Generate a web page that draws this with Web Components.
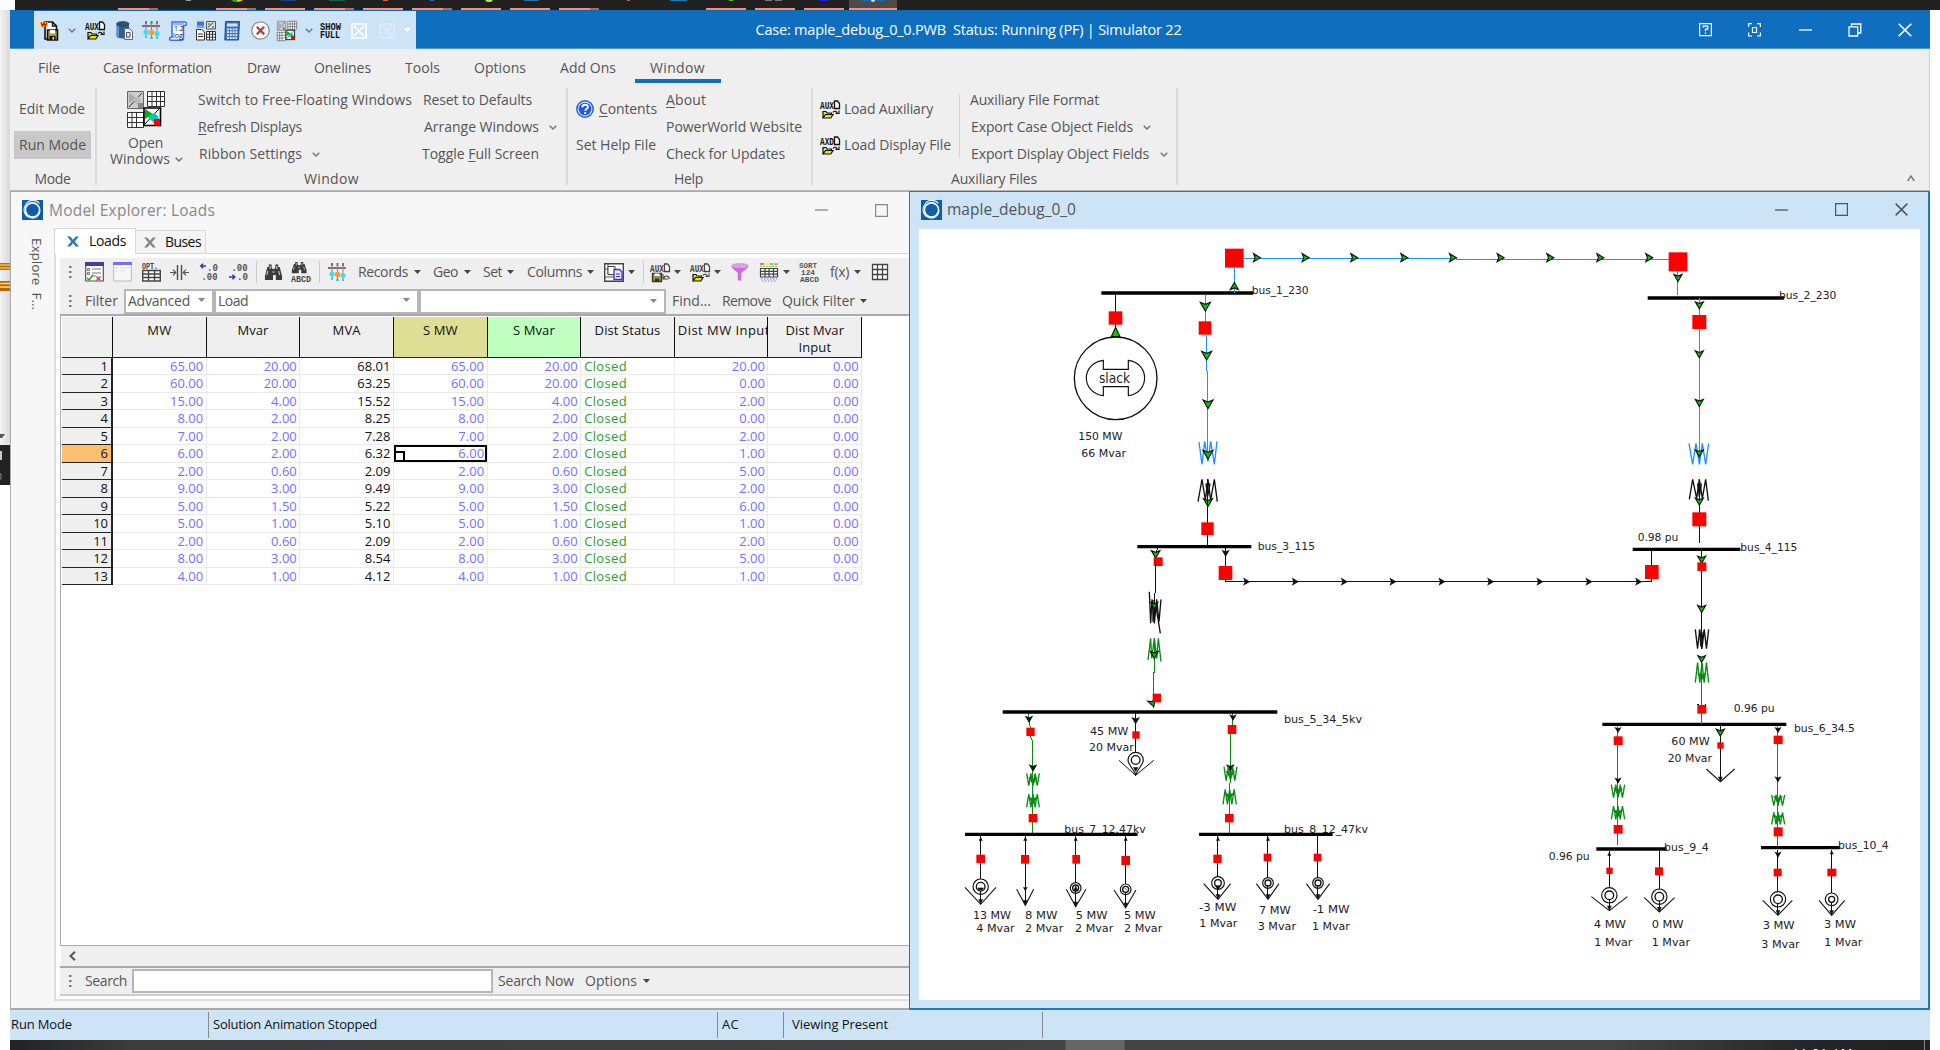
<!DOCTYPE html>
<html lang="en">
<head>
<meta charset="utf-8">
<title>Simulator 22</title>
<style>
html,body{margin:0;padding:0}
body{width:1940px;height:1050px;overflow:hidden;background:#fff;font-family:"Open Sans","Noto Sans",sans-serif;font-size:14px;color:#555}
</style>
</head>
<body>
<sim-desktop></sim-desktop>
<script>
const BASE = `*{box-sizing:border-box}.row{display:flex;align-items:center;white-space:nowrap}.it{flex:none;display:flex;align-items:center}.col{display:flex;flex-direction:column}svg{display:block}`;

function define(name, render, after) {
  customElements.define(name, class extends HTMLElement {
    connectedCallback() {
      if (this.shadowRoot) return;
      this.attachShadow({ mode: 'open' });
      const t = document.createElement('template');
      const [css, html] = render(this);
      t.innerHTML = `<style>${BASE}${css}</style>${html}`;
      this.shadowRoot.append(t.content.cloneNode(true));
      if (after) after(this);
    }
  });
}

/* Horizontal flow: each item is [left, width, markup, extra style]; gaps become margins. */
function row(start, items, style = '') {
  let end = start;
  const out = items.map(([x, w, html, st = '']) => {
    const m = x - end; end = x + w;
    return `<div class="it" style="margin-left:${m}px;width:${w}px;${st}">${html}</div>`;
  }).join('');
  return `<div class="row" style="${style}">${out}</div>`;
}
const T = (x, w, s, st) => [x, w, `<fit-label w="${w}">${s}</fit-label>`, st];
const I = (x, w, h, name, st) => [x, w, `<ui-icon name="${name}" w="${w}" h="${h}"></ui-icon>`, st];
const CH = (cx) => I(cx - 4, 8, 5, 'chev');
const CA = (cx, c = '#444') => [cx - 3.5, 7, `<ui-icon name="caret" w="7" h="4" style="color:${c};margin-top:-1px"></ui-icon>`];

/* Label whose letter spacing is adjusted to fill a given width. */
define('fit-label', () => [`:host{display:block;line-height:1.2;white-space:nowrap}span{display:inline-block}::slotted(u){text-underline-offset:2px;text-decoration-thickness:1px}`, `<span><slot></slot></span>`],
  el => {
    const w = +el.getAttribute('w'), s = el.shadowRoot.querySelector('span');
    el.style.width = w + 'px';
    const n = el.textContent.length, nat = s.getBoundingClientRect().width;
    if (nat) s.style.letterSpacing = ((w - nat) / n).toFixed(3) + 'px';
  });

const auxFolder = (a) => `<text x="0" y="8.5" font-family="Liberation Mono" font-weight="700" font-size="10.5" textLength="14" lengthAdjust="spacingAndGlyphs" fill="currentColor">${a}</text><path d="M14.5 1h3l2 2.500v5h-5z" fill="#fff" stroke="currentColor" stroke-width="1.300"/><path d="M3 18v-6.500h3l1 1.500h4.500v2M3 18l2.500-3.500h7.500l-2.200 3.500z" fill="#e8e030" stroke="#111" stroke-width="1.200"/><path d="M13 12.500c1.500-2 3.500-1.500 4.500 1M15.500 13.500h3.500v-3" fill="none" stroke="currentColor" stroke-width="1.200"/>`;
const binoc = `<path d="M1 13l2.500-9h1.500V1.500h3V4l1 2h2l1-2V1.500h3V4h1.500l2.500 9v4h-6.500v-5h-3v5H1z" fill="#3c3c3c"/><path d="M4 8l-1 4M15.500 8l1 4M6.500 3v3M13.500 3v3" stroke="#ddd" stroke-width="1"/><path d="M9 8h2v2H9z" fill="#999"/>`;
const sliders = `<path d="M0 5h18" stroke="#7d3558" stroke-width="1.500"/><path d="M4 2v15M9.500 2v16M15 2v16" stroke="#888" stroke-width="1"/><path d="M3 0h2v3H3zM8.500 0h2v3h-2zM14 0h2v3h-2z" fill="#777"/><circle cx="4" cy="11" r="2.600" fill="#2ee6f0"/><circle cx="9.500" cy="11.500" r="2.800" fill="#ff9a3c"/><circle cx="15" cy="12.500" r="2.600" fill="#2ee6f0"/><path d="M3 16h2M8 17h3M14 17h2" stroke="#2cc" stroke-width="1.500"/>`;
const openWin = `<path d="M.5.500h16v17H.5z" fill="#ccc" stroke="#666"/><path d="M2 16L15 2" stroke="#333"/><path d="M2 2l7 5-7 5z" fill="#aaa"/><path d="M6 8l5-3 3 5-4 4z" fill="#bbb"/><path d="M11 12h5v5h-5z" fill="#888"/><path d="M20.500.500h17v15h-17zM20.500 5.500h17M20.500 10.500h17M25 .500v15M29.500.500v15M33.500.500v15" fill="#fff" stroke="#333"/><path d="M.5 21.500h16v15H.5zM.5 26.500h16M.5 31.500h16M5 21.500v15M9.500 21.500v15" fill="#fff" stroke="#333"/><path d="M17 17h16.500v17.500H17z" fill="#fff" stroke="#000" stroke-width="1.600"/><path d="M18 33L32 18" stroke="#000"/><path d="M18 18l8 5-8 5z" fill="#00b400"/><path d="M21 26l6-4 4 3 1 5-5 2z" fill="#00c8c0"/><path d="M27 28h6v6h-6z" fill="#f00"/>`;
const tgrid = (n, c) => { let d = `M.5.500h${n}v${n}H.5z`; for (let i = 1; i < 3; i++) { const p = .5 + n * i / 3; d += `M.5 ${p}h${n}M${p} .5v${n}`; } return `<path d="${d}" fill="#fff" stroke="${c}" stroke-width="1.300"/>`; };

const ICONS = {
  chev: ['0 0 8 5', '<path d="M.7.700l3.300 3.300L7.300.700" fill="none" stroke="#777" stroke-width="1.500"/>'],
  chevup: ['0 0 8 7', '<path d="M.7 6l3.300-5L7.300 6" fill="none" stroke="#777" stroke-width="1.400"/>'],
  caret: ['0 0 7 4', '<path d="M0 0h7L3.500 4z" fill="currentColor"/>'],
  grip: ['0 0 3 13', '<path d="M0 0h2.500v2H0zM0 5h2.500v2H0zM0 10h2.500v2H0z" fill="#777"/>'],
  save: ['0 0 18 20', '<path d="M5 1h7.500l4 4v13H5z" fill="#fff" stroke="#111" stroke-width="1.600"/><path d="M12.500 1v4h4" fill="none" stroke="#111" stroke-width="1.400"/><path d="M7.500 9h10v10h-10z" fill="#a89c28" stroke="#111" stroke-width="1.600"/><path d="M10 9h5v3.500h-5z" fill="#fff"/><path d="M9.500 15h6v4h-6z" fill="#111"/><path d="M12.500 16h1.500v2.500h-1.500z" fill="#eee"/><path d="M0 1h8v4.500H0z" fill="#ffe000"/><path d="M1 1.500l1.500 3.500 1.500-3.500 1.500 3.500 1.500-3.500" fill="none" stroke="#d00" stroke-width="1.200"/>'],
  aux: ['0 0 20 19', auxFolder('AUX')],
  axd: ['0 0 20 19', auxFolder('AXD')],
  auxsave: ['0 0 20 19', `<text x="0" y="8.500" font-family="Liberation Mono" font-weight="700" font-size="10.500" textLength="14" lengthAdjust="spacingAndGlyphs" fill="#444">AUX</text><path d="M14.500 1h3l2 2.500v5h-5z" fill="#fff" stroke="#444" stroke-width="1.300"/><path d="M2.500 10.500h9v8h-9z" fill="#9a943c" stroke="#333" stroke-width="1.300"/><path d="M4.500 10.500h5V13h-5z" fill="#fff"/><path d="M5 15.500h4v3H5z" fill="#333"/><path d="M13 11v5h5M13.500 16c1-4 5-4 6 0" fill="none" stroke="#444" stroke-width="1.100"/>`],
  db: ['0 0 18 19', '<path d="M.5 3v12c0 1.500 3 2.500 6.500 2.500s6-1 6-2.500V3z" fill="#2d5f93"/><path d="M1 4v11c0 1 1 1.500 2 1.800V5z" fill="#5c93c4"/><ellipse cx="6.800" cy="2.800" rx="6.300" ry="2.300" fill="#2a5280" stroke="#173a60" stroke-width=".6"/><path d="M8.500 7.500h5l3 3v8h-8z" fill="#e8eef4" stroke="#667" stroke-width="1"/><path d="M10.500 15.500v-4h3.500v4.500h-4z" fill="none" stroke="#456" stroke-width="1"/>'],
  sliders: ['0 0 18 19', sliders],
  log: ['0 0 18 20', '<path d="M3 1h13c2 0 2 3.500 0 3.500h-1.500V17c0 1.500-1 2.200-2.200 2.200H2c-2 0-2-3 0-3h1z" fill="#f4f7ff" stroke="#3d6be0" stroke-width="1.500"/><path d="M3.500 1.800h11v2.500h-11z" fill="#8fb4ff"/><text x="5" y="10" font-family="Open Sans" font-size="7" fill="#222">1.2</text><text x="4" y="16.500" font-family="Open Sans" font-size="7" fill="#222">log</text>'],
  combo: ['0 0 21 20', '<path d="M2 .500h7v6H2z" fill="#3c76c8"/><path d="M1 6.500h9l-1-2H2z" fill="#88aadd"/><path d="M1.500 8.500h5l3 2.500v8h-8z" fill="#fff" stroke="#333"/><path d="M3 13h5M3 15.500h5" stroke="#333"/><path d="M11.500.500h9v7.500h-9z" fill="#ddd" stroke="#555"/><path d="M13 6l5-4M13 3h2M17 6h2" stroke="#444"/><path d="M11.500 10.500h9v8.500h-9zM11.500 13.300h9M11.500 16.200h9M14.500 10.500v8.500M17.500 10.500v8.500" fill="#fff" stroke="#333"/>'],
  calc: ['0 0 16 20', '<path d="M1.500.500h14l-1 18.500H.8z" fill="#3b74bd" stroke="#234f8c"/><path d="M3 2.500h10.500v3H3z" fill="#d4e4f6"/><path d="M3 8.300h10.500M3 11.200h10.500M3 14.100h10.500M3 17h10" stroke="#e6f0fb" stroke-width="1.800" stroke-dasharray="1.900 .900"/>'],
  redx: ['0 0 19 19', '<circle cx="9.500" cy="9.500" r="8.700" fill="#fbfbfb" stroke="#8d8d8d" stroke-width="1.300"/><path d="M5.800 5.800l7.400 7.400M13.200 5.800l-7.400 7.400" stroke="#e8222a" stroke-width="2.200"/>'],
  openwin: ['0 0 38 37', openWin],
  show: ['0 0 22 17', '<g font-family="Liberation Mono" font-weight="700" font-size="10.500" fill="#111"><text x="0" y="7.500" textLength="21" lengthAdjust="spacingAndGlyphs">SHOW</text><text x="0" y="16" textLength="20" lengthAdjust="spacingAndGlyphs">FULL</text></g>'],
  xbox: ['0 0 16 16', '<path d="M1 1h14v14H1zM3 3l10 10M13 3L3 13" fill="none" stroke="#fff" stroke-width="1.600"/>'],
  help: ['0 0 13 14', '<path d="M.6.600h11.800v12H.6z" fill="none" stroke="#fff" stroke-width="1.200"/><path d="M4.300 4.500V3.200h4.400v3H6.500v2M6.500 9.500v1.600" fill="none" stroke="#fff" stroke-width="1.300"/>'],
  focus: ['0 0 13 14', '<path d="M.6 4V.600H4M9 .600h3.400V4M12.400 9.500V13H9M4 13H.6V9.500M4.500 4.500h4v5h-4z" fill="none" stroke="#fff" stroke-width="1.200"/>'],
  min: ['0 0 13 2', '<path d="M0 1h13" stroke="currentColor" stroke-width="1.300"/>'],
  restore: ['0 0 14 14', '<path d="M1 3.800h8.700v9.200H1zM3.500 3.800V1h9.300v9H9.700" fill="none" stroke="#fff" stroke-width="1.300"/>'],
  max: ['0 0 13 13', '<path d="M.6.600h11.800v11.800H.6z" fill="none" stroke="currentColor" stroke-width="1.200"/>'],
  close: ['0 0 14 14', '<path d="M.7.700l12.600 12.600M13.300.700L.7 13.300" stroke="currentColor" stroke-width="1.600"/>'],
  tabx: ['0 0 12 12', '<path d="M0 .500h3.300L6 4 8.700.500H12L7.700 6l4.300 5.500H8.700L6 8l-2.700 3.500H0L4.300 6z" fill="currentColor"/>'],
  question: ['0 0 18 18', '<circle cx="9" cy="9" r="8.200" fill="#cfe0fb" stroke="#2b62d8" stroke-width="1.500"/><circle cx="9" cy="9" r="6.300" fill="#2459d6"/><path d="M6.300 7.300c0-3.400 5.600-3.400 5.600-.300 0 2-2.700 2-2.700 3.800M9.200 12v2" fill="none" stroke="#fff" stroke-width="1.900"/>'],
  logo: ['0 0 21 20', '<path d="M0 0h21v20H0z" fill="#0f5ca8"/><circle cx="10.500" cy="10" r="7.100" fill="none" stroke="#fff" stroke-width="1.700"/><path d="M17.500 3.500a8.500 8.500 0 0 0-13.500.500M4.500 4c-4 4-3 10.500 2 13M5 15.500c5 5 12 2 13-4" fill="none" stroke="#e6f1fb" stroke-width="1.100"/>'],
  t1: ['0 0 19 20', '<path d="M.7 1h17.600v18H.7z" fill="#fff" stroke="#555" stroke-width="1.200"/><path d="M0 0h19v4H0z" fill="#443aa8"/><path d="M2.500 6.500h2v2h-2zM2.500 10.500h2v2h-2zM7 7h9M7 11h9M7 14h4" fill="none" stroke="#777"/><path d="M2 16l2 2 4-5" fill="none" stroke="#2a9a2a" stroke-width="1.400"/><path d="M11.500 14.500l4 4M15.500 14.500l-4 4" stroke="#e33" stroke-width="1.400"/>'],
  t2: ['0 0 19 20', '<path d="M.7 1h17.600v18H.7z" fill="#f7f7f7" stroke="#bbb"/><path d="M0 0h19v3H0z" fill="#7470ea"/><path d="M2 6h3M7 6h9M2 9h3M7 9h5" stroke="#ddd"/>'],
  opt: ['0 0 19 20', '<text x="0" y="6.500" font-family="Liberation Mono" font-weight="700" font-size="9" textLength="16" lengthAdjust="spacingAndGlyphs" fill="#444">OPT.</text><path d="M.7 8.500h17.600v10.500H.7zM.7 12h17.600M.7 15.500h17.600M6.500 8.500V19M12.500 8.500V19" fill="#fff" stroke="#444" stroke-width="1.400"/>'],
  width: ['0 0 19 18', '<path d="M7.500 1v16M11.500 1v16" stroke="#555" stroke-width="1.500"/><path d="M0 9h5.500M3 6l2.800 3L3 12M19 9h-5.500M16 6l-2.800 3 2.800 3" fill="none" stroke="#555" stroke-width="1.200"/>'],
  dec1: ['0 0 19 18', '<path d="M6 3H1M3 .700L.8 3 3 5.300" fill="none" stroke="#3b32b8" stroke-width="1.600"/><g font-family="Liberation Mono" font-size="10.500" font-weight="700" fill="#555"><text x="7" y="7.500" textLength="11" lengthAdjust="spacingAndGlyphs">.0</text><text x="1.500" y="17" textLength="16" lengthAdjust="spacingAndGlyphs">.00</text></g>'],
  dec2: ['0 0 19 18', '<path d="M0 14h5.500M3.500 11.700L5.700 14l-2.200 2.300" fill="none" stroke="#3b32b8" stroke-width="1.600"/><g font-family="Liberation Mono" font-size="10.500" font-weight="700" fill="#555"><text x="2.500" y="7.500" textLength="16" lengthAdjust="spacingAndGlyphs">.00</text><text x="8" y="17" textLength="11" lengthAdjust="spacingAndGlyphs">.0</text></g>'],
  binoc: ['0 0 20 19', binoc],
  binabc: ['0 0 20 20', `<g transform="translate(0 -1) scale(.82 .72)">${binoc}</g><text x="0" y="19.500" font-family="Liberation Mono" font-weight="700" font-size="8.500" textLength="20" lengthAdjust="spacingAndGlyphs" fill="#444">ABCD</text>`],
  copy: ['0 0 20 19', '<path d="M.7.700h18.600v17.600H.7z" fill="#fff" stroke="#444" stroke-width="1.400"/><path d="M.7 6h8M4 .700v11h5M.7 14h18" fill="none" stroke="#555"/><path d="M4 3.500h7v8H4z" fill="#fff" stroke="#444"/><path d="M10 6.500h5.500l2.500 2.500v7.500h-8z" fill="#e8e8ff" stroke="#3a39a8" stroke-width="1.300"/><path d="M12 11h4M12 13.500h4" stroke="#3a39a8"/>'],
  funnel: ['0 0 18 18', '<ellipse cx="9" cy="2.600" rx="8.700" ry="2.500" fill="#e29be6"/><path d="M.3 3c1 3.500 5.500 5.500 6.500 7v7.500h3.500V10c1-1.500 6.200-3.500 7.400-7-3 2.600-14 2.600-17.400 0z" fill="#cc6fd2"/>'],
  colgrid: ['0 0 18 19', '<path d="M.5 5.500h17v8.500H.5zM.5 8.300h17M.5 11.200h17M5 5.500V14M9 5.500V14M13.500 5.500V14" fill="#fff" stroke="#444" stroke-width="1.200"/><path d="M0 1h4" stroke="#e44" stroke-width="1.500"/><path d="M5 1h4" stroke="#ee3" stroke-width="1.500"/><path d="M10 1h3" stroke="#3c3" stroke-width="1.500"/><path d="M14 1h4" stroke="#f84" stroke-width="1.500"/><path d="M0 3.500h18" stroke="#9c6" stroke-dasharray="2 1"/><path d="M1 16h16M2 18h14" stroke="#77f" stroke-dasharray="1.500 1.500"/>'],
  sort: ['0 0 20 20', '<g font-family="Liberation Mono" font-weight="700" font-size="8" fill="#555"><text x="0" y="6" textLength="18" lengthAdjust="spacingAndGlyphs">SORT</text><text x="2" y="13" textLength="14" lengthAdjust="spacingAndGlyphs">124</text><text x="1" y="20" textLength="19" lengthAdjust="spacingAndGlyphs">ABCD</text></g>'],
  grid: ['0 0 16 16', tgrid(15, '#444')],
  left: ['0 0 7 10', '<path d="M6 .700L1.500 5 6 9.300" fill="none" stroke="#555" stroke-width="2"/>']
};
define('ui-icon', el => [`:host{display:block;flex:none}svg{overflow:visible}`, `<svg width="${el.getAttribute('w')}" height="${el.getAttribute('h')}" viewBox="${ICONS[el.getAttribute('name')][0]}" preserveAspectRatio="none">${ICONS[el.getAttribute('name')][1]}</svg>`]);

/* Taskbar sliver above the window */
define('task-strip', () => {
  const run = [[118, 31, 9], [216, 31, 9], [265, 40], [314, 31, 9], [363, 40], [412, 31, 9], [461, 40], [510, 40], [559, 31, 9], [706, 40], [755, 40], [804, 40], [849, 48]];
  const dots = [[186, 5, '#999'], [281, 15, '#1d3f92'], [329, 16, '#1c6040'], [383, 5, '#e0603c'], [430, 4, '#2a62d8'], [524, 15, '#2a6f9c'], [627, 3, '#c07038'], [670, 17, '#1d7ab8'], [729, 4, '#6ab41e'], [765, 7, '#777'], [775, 7, '#777'], [819, 9, '#2416ff']];
  let s = `<rect x="849" width="48" height="10" fill="#4b4b4b"/>`;
  run.forEach(([x, w, d]) => s += `<rect x="${x}" y="8" width="${w}" height="2" fill="#ff8c6c"/>` + (d ? `<rect x="${x + w}" y="8" width="${d}" height="2" fill="#b4685a"/>` : ''));
  dots.forEach(([x, w, c]) => s += `<rect x="${x}" width="${w}" height="1" fill="${c}"/>`);
  s += `<path d="M231 0h11l-3 2h-5z" fill="#2c9e3c"/><path d="M237 0h6l-3 1.500h-3z" fill="#f4c81e"/><path d="M485 0h8l-2 2h-4z" fill="#b4e85c"/><path d="M861 0h24v1.500h-24z" fill="#1766b0"/><circle cx="873" cy="0" r="2" fill="#dde"/>`;
  return [`:host{display:block;height:10px;background:linear-gradient(90deg,#fff 15px,#212121 15px)}`, `<svg width="1940" height="10">${s}</svg>`];
});

define('title-bar', () => [`:host{display:block;height:39px;background:#106ebe;border-top:1px solid #0f65ae;border-bottom:1px solid #4d97d1;color:#fff}.row{height:37px}.qat{background:#cde4f6;height:38px;color:#111}.qat .row{height:38px;margin-top:1px}fit-label{font-size:14.5px}`,
  row(10, [[34, 382, `<div class="qat" style="width:382px">${row(34, [
    I(40, 18, 20, 'save'), CH(72), I(85, 20, 19, 'aux'), I(116, 18, 19, 'db'), I(142, 18, 19, 'sliders'), I(169, 18, 20, 'log'), I(195, 21, 20, 'combo'), I(224, 16, 20, 'calc'), I(251, 19, 19, 'redx'), I(277, 20, 20, 'openwin'), CH(309), I(320, 22, 17, 'show'), I(351, 16, 16, 'xbox'), I(379, 16, 16, 'xbox', 'opacity:.3'), CA(407.5, '#fff')])}</div>`],
    T(755.5, 426, 'Case: maple_debug_0_0.PWB&nbsp; Status: Running (PF) | Simulator 22'),
    I(1698.5, 13, 14, 'help'), I(1748, 13, 14, 'focus'), I(1799, 13, 2, 'min'), I(1848, 14, 14, 'restore'), I(1898, 14, 14, 'close')])]);

define('ribbon-tabs', () => [`:host{display:block;height:36px}.row{height:34px}.it{height:34px;padding-top:4px}.on{width:86px;height:34px;margin-top:-4px;padding:4px 0 0 15px;border-bottom:4px solid #106ebe;display:flex;align-items:center}.on fit-label{margin-top:4px}`,
  row(10, [T(38, 22, 'File', 'padding-top:5px'), T(103, 109, 'Case Information'), T(247, 33, 'Draw'), T(314, 57, 'Onelines'), T(405, 35, 'Tools'), T(474, 52, 'Options'), T(560, 56, 'Add Ons'), [635, 86, `<div class="on"><fit-label w="55">Window</fit-label></div>`]])]);

/* Ribbon columns: two-line or three-line stacks */
const stack = (x, w, n, rows) => [x, w, `<div class="col s${n}">${rows.map(r => row(x, r)).join('')}</div>`];
define('ribbon-group', el => [`:host{display:flex;flex-direction:column;flex:none;border-right:2px solid #dadada;height:97px;margin-top:3px}.body{height:81px;flex:none}.cap{height:20px;flex:none;padding-top:2px}`, `<div class="body"><slot></slot></div><div class="cap"><slot name="cap"></slot></div>`]);
define('ribbon-bar', () => {
  const g = (x, w, body, cx, cw, cap) => `<ribbon-group style="width:${w}px"><div style="margin-top:-3px">${row(x, body)}</div><div slot="cap">${row(x, [T(cx, cw, cap)])}</div></ribbon-group>`;
  return [`:host{display:flex;height:105px}.row{align-items:flex-start}.col .row{align-items:center}.s3{padding-top:1px}.s3>.row{height:28px}.s3>.row:nth-child(2){height:26px}.s2{padding-top:6px}.s2>.row{height:36px}.run{width:77px;height:28px;background:#c8c8c8;padding-left:5px;display:flex;align-items:center}
  .open{padding-top:6px}.open .row{height:16px;align-items:center}.short{width:1px;height:64px;background:#d4d4d4;margin-top:9px}`,
  g(10, 87, [stack(14, 77, 2, [[T(19, 66, 'Edit Mode')], [[14, 77, '<div class="run"><fit-label w="67">Run Mode</fit-label></div>']]])], 34.5, 36, 'Mode') +
  g(97, 471, [
    [110, 75, `<div class="open">${row(110, [I(127, 38, 37, 'openwin')], 'height:43px;align-items:flex-start')}${row(110, [T(128, 35, 'Open')], 'margin-top:1px')}${row(110, [T(110, 60, 'Windows'), CH(179)])}</div>`],
    stack(198, 214, 3, [[T(198, 214, 'Switch to Free-Floating Windows')], [T(198, 104, '<u>R</u>efresh Displays')], [T(199, 103, 'Ribbon Settings'), CH(316)]]),
    stack(422, 136, 3, [[T(423, 109, 'Reset to Defaults')], [T(424, 115, 'Arrange Windows'), CH(553)], [T(422, 117, 'Toggle <u>F</u>ull Screen')]])], 304, 55, 'Window') +
  g(568, 245, [stack(576, 82, 2, [[I(576, 18, 18, 'question'), T(599, 58, '<u>C</u>ontents')], [T(576, 80, 'Set Help File')]]),
    stack(666, 137, 3, [[T(666, 40, '<u>A</u>bout')], [T(666, 136, 'PowerWorld Website')], [T(666, 119, 'Check for Updates')]])], 674, 29, 'Help') +
  g(813, 365, [stack(820, 132, 2, [[I(820, 20, 19, 'aux', 'color:#111'), T(844, 89, 'Load Auxiliary')], [I(820, 20, 19, 'axd', 'color:#111'), T(844, 107, 'Load Display File')]]),
    [959, 1, '<div class="short"></div>'],
    stack(970, 200, 3, [[T(970, 129, 'Auxiliary File Format')], [T(971, 162, 'Export Case Object Fields'), CH(1147)], [T(971, 178, 'Export Display Object Fields'), CH(1164)]])], 951, 86, 'Auxiliary Files') +
  row(1178, [I(1907, 8, 7, 'chevup')], 'align-self:flex-end;height:24px;align-items:center')];
});

define('data-grid', () => {
  const rows = [['65.00', '20.00', '68.01', '20.00'], ['60.00', '20.00', '63.25', '0.00'], ['15.00', '4.00', '15.52', '2.00'], ['8.00', '2.00', '8.25', '0.00'], ['7.00', '2.00', '7.28', '2.00'], ['6.00', '2.00', '6.32', '1.00'], ['2.00', '0.60', '2.09', '5.00'], ['9.00', '3.00', '9.49', '2.00'], ['5.00', '1.50', '5.22', '6.00'], ['5.00', '1.00', '5.10', '1.00'], ['2.00', '0.60', '2.09', '2.00'], ['8.00', '3.00', '8.54', '5.00'], ['4.00', '1.00', '4.12', '1.00']];
  const heads = ['MW', 'Mvar', 'MVA', 'S MW', 'S Mvar', 'Dist Status', 'Dist MW Input', 'Dist Mvar<br>Input'];
  const bg = { 3: 'background:#dede94', 4: 'background:#bfffbf', 6: 'padding-left:3px;text-align:left;letter-spacing:.45px' };
  const h = `<div class="h rh"></div>` + heads.map((t, i) => `<div class="h" style="${bg[i] || ''}">${t}</div>`).join('');
  const b = rows.map((r, i) => `<div class="n" ${i == 5 ? 'style="background:#ffbf6f"' : ''}>${i + 1}</div>` +
    [r[0], r[1], r[2], r[0], r[1], 'Closed', r[3], '0.00'].map((v, c) => `<div class="c ${c == 2 ? 'k' : ''} ${c == 5 ? 'g' : ''}">${i == 5 && c == 3 ? '<i></i><b></b>' : ''}<span>${v}</span></div>`).join('')).join('');
  return [`:host{display:grid;grid-template-columns:51px repeat(8,93.65px);grid-template-rows:41px repeat(13,17.49px);font-size:13px;color:#111;width:max-content}
  .h{background:#efefef;border-right:1.500px solid #111;border-bottom:1.500px solid #222;text-align:center;line-height:16.500px;padding-top:5px;white-space:nowrap;overflow:hidden;letter-spacing:.1px}
  .n{background:#efefef;border-right:2px solid #222;border-bottom:1.500px solid #222;text-align:right;padding-right:3px;line-height:17.500px}
  .c{border-right:1px solid #eaeaea;border-bottom:1px solid #eaeaea;text-align:right;padding-right:2.500px;line-height:17.500px;color:#7470ff;position:relative}
  .k{color:#111}.g{color:#2c9c2c;text-align:left;padding-left:3px;letter-spacing:.35px}
  span{position:relative}b,i{position:absolute;box-sizing:border-box}i{left:0;right:0;top:0;bottom:0;border:2px solid #000}b{left:0;bottom:0;width:11px;height:11px;border:2px solid #000;background:#fff}`, h + b];
});

define('model-explorer', () => [`:host{display:flex;height:781px}
  .side{width:43px;flex:none}.side div{writing-mode:vertical-rl;font-size:13.500px;margin:10px 0 0 18px;line-height:16px;white-space:pre;width:16px;color:#555}
  .panel{flex:1;border-left:2px solid #dedede;background:#fff;height:773px;border-bottom:2px solid #dedede;display:flex;flex-direction:column;color:#555}
  .tabs{display:flex;flex:none;height:26px;background:#f7f7f7;color:#111;margin-left:-2px}
  .t1{width:82px;background:#fff;border:1px solid #d8d8d8;border-bottom:0;height:26px}.t1 .row{height:24px}
  .t2{width:70px;background:#f4f4f4;border:1px solid #d8d8d8;border-left:0;margin-top:2px;height:24px}.t2 .row{height:23px}.fill{flex:1;border-bottom:1px solid #d8d8d8}
  .bar{background:#efefef;flex:none;margin:4px 0 0 4px;height:56px}.bar>.row{height:28px}.bar>.row+.row{height:26px;margin-top:2px}
  .sep{width:1px;height:22px;background:#ccc}
  .box{background:#fff;border:2px solid #b6b6b6;height:25px;display:flex;align-items:center}
  .grid{margin-left:4px;border:1px solid #aaa;border-right:0;border-top:2px solid #a9a9ad;flex:1;padding:1px 0 0 1px;background:#fff;overflow:hidden;min-height:0}
  .scroll{height:20px;flex:none;background:#efefef;margin-left:5px}.scroll .row{height:20px}
  .find{height:30px;flex:none;background:#efefef;margin:0 0 3px 4px;border-top:2px solid #aaa;border-bottom:2px solid #ccc;display:flex;align-items:center}`,
  `<div class="side"><div>Explore  F...</div></div><div class="panel">
  <div class="tabs"><div class="t1">${row(55, [I(67, 12, 11, 'tabx', 'color:#2c78b4'), T(89, 37, 'Loads')])}</div><div class="t2">${row(136, [I(143.500, 12, 11, 'tabx', 'color:#888'), T(165, 36, 'Buses')])}</div><div class="fill"></div></div>
  <div class="bar">${row(60, [I(68.5, 3, 13, 'grip'), I(85, 19, 20, 't1'), I(113, 19, 20, 't2'), I(142, 19, 20, 'opt'), I(170, 19, 17, 'width'), I(200, 19, 18, 'dec1'), I(229, 19, 18, 'dec2'), [256, 1, '<div class="sep"></div>'], I(264, 19, 19, 'binoc'), I(291, 20, 20, 'binabc'), [319, 1, '<div class="sep"></div>'], I(328, 18, 19, 'sliders'), T(358, 50, 'Records'), CA(417), T(433, 25, 'Geo'), CA(467), T(483, 19, 'Set'), CA(510.5), T(527, 55, 'Columns'), CA(590.5), I(604, 20, 19, 'copy'), CA(631), [643, 1, '<div class="sep"></div>'], I(650, 20, 19, 'auxsave'), CA(677), I(690, 20, 19, 'aux', 'color:#444'), CA(717), I(731, 18, 18, 'funnel'), I(760, 18, 19, 'colgrid'), CA(786), I(799, 20, 20, 'sort'), T(830, 19, 'f(x)'), CA(857), I(872, 16, 16, 'grid')])}
  ${row(60, [I(68.5, 3, 13, 'grip'), T(85, 33, 'Filter'), [124, 90, `<div class="box" style="width:90px">${row(126, [T(128, 62, 'Advanced'), CA(201, '#888')])}</div>`], [214, 205, `<div class="box" style="width:205px">${row(216, [T(218, 30, 'Load'), CA(406, '#888')])}</div>`], [419, 247, `<div class="box" style="width:247px">${row(421, [CA(653.5, '#888')])}</div>`], T(672, 39, 'Find...'), T(722, 49, 'Remove'), T(782, 73, 'Quick Filter'), CA(863)])}</div>
  <div class="grid"><data-grid></data-grid></div>
  <div class="scroll">${row(61, [I(69, 7, 10, 'left')])}</div>
  <div class="find">${row(60, [I(68.5, 3, 13, 'grip'), T(85, 42, 'Search'), [132, 361, `<div class="box" style="width:361px;height:24px"></div>`], T(498, 76, 'Search Now'), T(585, 52, 'Options'), CA(646)])}</div></div>`]);

/* One-line diagram. Each sheet uses thirds of a pixel relative to its own origin. */
define('oneline-diagram', () => {
  const B = '#1e90ff', K = '#111', G = '#0a8c14';
  const ln = (d, c = K) => `<path d="${d}" fill="none" stroke="${c}" stroke-width="1" vector-effect="non-scaling-stroke" shape-rendering="crispEdges"/>`;
  const bus = (x1, x2, y) => `<path d="M${x1} ${y}H${x2}" stroke="#000" stroke-width="10"/>`;
  const br = (x1, y1, x2, y2) => `<path d="M${x1} ${y1}H${x2}V${y2}H${x1}z" fill="#f00"/>`;
  const zz = (pts, c) => `<polyline points="${pts}" fill="none" stroke="${c}" stroke-width="4"/>`;
  const W = (x1, x2, y1, y2, c) => { let p = ''; for (let i = 0; i < 7; i++) p += `${x1 + (x2 - x1) * i / 6},${i % 2 ? y2 : y1} `; return zz(p, c); };
  const ar = (x, y, r, s = 1, f = '#0c0') => `<path transform="translate(${x} ${y}) rotate(${r}) scale(${s})" d="M13 0L-13 -15L-7 0L-13 15z" fill="${f}" stroke="${f === G ? G : '#111'}" stroke-width="${3.500 / s}"/>`;
  const tx = (x1, x2, y, s, fs = 34) => `<text x="${x1}" y="${y}" font-size="${fs}" textLength="${x2 - x1}" lengthAdjust="spacingAndGlyphs">${s}</text>`;
  const load = (x, top, brk, cy, r, ri, vx1, vx2, vy, tip, up = 1) => ln(`M${x} ${top}V${r ? cy - r : tip}M${x} ${r ? cy + ri : tip}V${tip}`) + br(...brk) +
    (r ? `<circle cx="${x}" cy="${cy}" r="${r}" fill="none" stroke="#111" stroke-width="3.500"/><circle cx="${x}" cy="${cy}" r="${ri}" fill="none" stroke="#111" stroke-width="4"/>` : '') +
    `<path d="M${vx1} ${vy}L${x} ${tip}L${vx2} ${vy}" fill="none" stroke="#111" stroke-width="3.200"/><path d="M${x - 7} ${tip - 15}h14l-7 15z" fill="#111"/>` +
    (up ? `<path d="M${x - 6} ${top + 14}l6 -12 6 12z" fill="#111"/>` : '');
  const sheet = (x, y, s) => `<g transform="translate(${x} ${y}) scale(.33333)">${s}</g>`;

  const a = ln('M611 85H1250V88H1890', B) + ln('M583 113V190', B) + [651, 797, 943, 1093, 1239].map(x => ar(x, 83, 0, .8)).join('') + ar(583, 168, -90, .8) +
    ln('M227 194V320') + br(555, 56, 611, 113) + br(206, 244, 247, 284) + `<path d="M227 292l-13 28h26z" fill="#0c0" stroke="#111" stroke-width="3.500"/>` +
    `<circle cx="227" cy="445" r="124" fill="none" stroke="#111" stroke-width="4"/><path d="M190 391V418H265V391C330 400 330 488 265 497V470H190V497C122 488 122 400 190 391z" fill="none" stroke="#111" stroke-width="3.500"/>` +
    tx(177, 270, 459, 'slack', 44) + tx(115, 247, 630, '150 MW') + tx(124, 258, 682, '66 Mvar') +
    ln('M496 194V300M500 314V422M504 422V690', B) + ar(496, 230, 90) + br(476, 274, 514, 314) + ar(500, 377, 90) + ar(504, 523, 90) +
    zz('477,636 486,703 494,634 504,695 512,634 523,703 531,634', B) + ar(504, 674, 90) +
    zz('474,815 486,748 496,810 504,748 512,810 523,748 532,815', K) + zz('498,760 503,800 510,760', K) + ar(504, 818, 90, .9) + ln('M504 748V830M502 832V945') + br(484, 877, 521, 915) +
    ln('M352 955L347 975V1056') + ar(347, 973, 90, .85) + br(341, 982, 368, 1008) + ln('M557 955V1055') + ar(557, 970, 90, .55, '#111') + br(536, 1008, 577, 1050) +
    bus(184, 640, 189) + ln('M583 178V190', B) + bus(292, 634, 950) + tx(635, 806, 192, 'bus_1_230') + tx(653, 825, 959, 'bus_3_115');

  const b = [2, 151, 301, 448].map(x => ar(x, 83, 0, .8)).join('') + ln('M534 124V194', B) + ar(534, 144, 90, .8) + br(506, 67, 562, 124) +
    bus(443, 852, 204) + tx(837, 1009, 208, 'bus_2_230') + ln('M598 203V690', B) + ar(598, 226, 90, .8) + br(577, 255, 619, 297) + ar(598, 373, 90, .8) + ar(598, 519, 90, .8) +
    zz('567,640 578,703 588,640 598,703 607,640 617,703 626,640', B) + ar(598, 670, 90, .8) + zz('568,808 578,748 590,805 598,748 607,805 617,748 625,812', K) + zz('593,760 598,800 604,760', K) +
    ln('M598 748V940') + ar(598, 815, 90, .8) + br(577, 847, 619, 889) + tx(413, 535, 932, '0.98 pu') + ln('M456 963V1055') + br(435, 1005, 476, 1047) +
    ln('M605 963V1195') + ar(605, 989, 90, .8) + br(592, 997, 619, 1023) + bus(398, 721, 958) + tx(721, 892, 962, 'bus_4_115');

  const c = ln('M796 0V5H2076') + [860, 1006, 1153, 1299, 1446, 1592, 1740, 1887, 2036].map(x => ar(x, 5, 0, .55, '#111')).join('') +
    ln('M587 -60V20L583 60V130') + zz('568,35 572,130 576,58 583,130 590,58 597,125 603,58', K) + zz('579,60 579,125', K) + zz('586,70 593,110 601,160', K) + ar(583, 77, 90, .7) +
    zz('564,240 572,175 575,235 583,175 590,235 595,175 603,245', G) + ln('M583 175V278H580V385', G) + ar(583, 225, 90, .8) + ar(578, 370, 72, .8) + br(578, 341, 603, 367) +
    tx(972, 1206, 430, 'bus_5_34_5kv') +
    ln('M204 400L211 445V468L219 488V760', G) + ar(207, 418, 90, .6, '#111') + br(199, 443, 224, 468) + ar(219, 564, 90, .6, '#111') + W(200, 238, 580, 617, G) + W(200, 238, 682, 642, G) + ar(219, 603, 90, .7, G) + ar(219, 662, 90, .7, G) + br(206, 702, 232, 727) +
    ln('M527 400V515') + ar(527, 422, 90, .6, '#111') + br(517, 454, 539, 476) + `<path d="M504 540a23 23 0 0 1 46 0c0 14-14 22-23 44c-9-22-23-30-23-44z" fill="none" stroke="#111" stroke-width="3.500"/><circle cx="527" cy="540" r="13" fill="none" stroke="#111" stroke-width="4"/><path d="M477 541L527 586L581 541" fill="none" stroke="#111" stroke-width="3"/><path d="M519 562h16l-8 14z" fill="#111"/>` +
    tx(390, 505, 464, '45 MW') + tx(387, 521, 513, '20 Mvar') +
    ln('M819 400V436M811 462V600L808 628V760', G) + ar(819, 413, 90, .5, '#111') + br(803, 435, 829, 462) + ar(811, 564, 90, .6, '#111') + W(792, 831, 560, 602, G) + W(789, 829, 673, 628, G) + ar(811, 585, 90, .7, G) + ar(808, 650, 90, .7, G) + br(795, 702, 821, 727) +
    bus(128, 952, 396) + tx(313, 557, 760, 'bus_7_12.47kv') + tx(972, 1224, 760, 'bus_8_12_47kv') + bus(15, 533, 763) + bus(717, 1118, 763) +
    load(62, 768, [49, 824, 75, 849], 920, 23, 13, 15, 108, 922, 973) + load(196, 768, [183, 825, 207, 851], 928, 0, 0, 170, 221, 928, 976) + `<path d="M189 922h14l-7 12z" fill="#111"/>` +
    load(347, 768, [337, 825, 360, 851], 924, 16, 9, 319, 378, 928, 980) + load(497, 768, [484, 828, 510, 855], 928, 16, 9, 462, 528, 930, 983) +
    load(774, 768, [760, 824, 785, 849], 909, 19, 10, 731, 812, 911, 958) + load(924, 768, [911, 821, 934, 844], 909, 16, 9, 889, 957, 911, 958) + load(1074, 768, [1061, 821, 1084, 844], 909, 16, 9, 1039, 1109, 911, 958, 0) +
    `<path d="M343 930l4-12 6 14M493 924l8 6M767 918h14l-7 12zM54 924h16l-2 5H56z" fill="#111" stroke="#111" stroke-width="2"/>` +
    tx(39, 153, 1018, '13 MW') + tx(49, 164, 1057, '4 Mvar') + tx(195, 292, 1018, '8 MW') + tx(195, 310, 1057, '2 Mvar') + tx(347, 442, 1018, '5 MW') + tx(345, 460, 1057, '2 Mvar') + tx(492, 587, 1018, '5 MW') + tx(492, 607, 1057, '2 Mvar') +
    tx(717, 829, 993, '-3 MW') + tx(718, 832, 1042, '1 Mvar') + tx(897, 992, 1001, '7 MW') + tx(893, 1008, 1049, '3 Mvar') + tx(1058, 1169, 998, '-1 MW') + tx(1056, 1169, 1049, '1 Mvar');

  const d = ln('M605 145V208') + ar(605, 87, 90, .8) + W(586, 626, 148, 206, K) + zz('598,150 603,200 610,155', K) + ar(605, 237, 90, .75) + W(586, 626, 308, 248, G) + ln('M605 248V430', G) + ar(605, 290, 90, .7, G) + ln('M592 372l6 6M618 372l-6 6') + br(592, 375, 619, 401) +
    tx(701, 824, 396, '0.96 pu') + tx(882, 1065, 456, 'bus_6_34.5') +
    ln('M354 438V795', G) + ar(354, 450, 90, .45, '#111') + br(341, 469, 368, 495) + ar(354, 602, 90, .45, '#111') + W(334, 374, 614, 653, G) + W(334, 374, 718, 678, G) + ar(354, 635, 90, .7, G) + ar(354, 700, 90, .7, G) + br(341, 735, 368, 761) +
    load(661, 438, [652, 487, 671, 506], 567, 0, 0, 619, 704, 567, 605, 0) + ar(661, 458, 90, .8) + tx(514, 629, 494, '60 MW') + tx(503, 636, 546, '20 Mvar') +
    ln('M834 438V800', G) + ar(834, 450, 90, .45, '#111') + br(821, 467, 848, 492) + ar(834, 598, 90, .45, '#111') + W(815, 854, 645, 677, G) + W(815, 854, 733, 697, G) + ar(834, 660, 90, .7, G) + ar(834, 715, 90, .6, G) + br(821, 742, 848, 769) +
    bus(307, 859, 433) + ln('M605 425V432', G) + bus(289, 500, 807) + bus(783, 1020, 803) + tx(492, 626, 812, 'bus_9_4') + tx(146, 269, 839, '0.96 pu') + tx(1014, 1166, 808, 'bus_10_4') +
    load(328, 813, [319, 863, 338, 882], 946, 23, 13, 274, 382, 950, 992) + load(478, 813, [465, 862, 489, 886], 950, 23, 13, 433, 524, 953, 996, 0) +
    load(834, 809, [821, 866, 845, 889], 958, 23, 13, 788, 877, 961, 1006, 0) + ar(834, 824, 90, .45, '#111') + load(995, 809, [982, 866, 1009, 889], 958, 19, 9, 957, 1034, 961, 1006) +
    tx(281, 378, 1045, '4 MW') + tx(283, 397, 1099, '1 Mvar') + tx(455, 551, 1045, '0 MW') + tx(455, 570, 1099, '1 Mvar') + tx(788, 884, 1048, '3 MW') + tx(784, 899, 1105, '3 Mvar') + tx(972, 1068, 1045, '3 MW') + tx(973, 1087, 1099, '1 Mvar');

  return [`:host{display:block;background:#fff;width:1001px;height:771px}text{font-family:"DejaVu Sans Condensed","DejaVu Sans",sans-serif;fill:#222}`,
    `<svg width="1001" height="771" viewBox="919 229 1001 771">${sheet(1040, 230, a)}${sheet(1500, 230, b)}${sheet(960, 580, c)}${sheet(1500, 580, d)}</svg>`];
});

define('mdi-window', el => {
  const act = el.hasAttribute('active');
  const cap = act
    ? row(910, [I(921, 21, 20, 'logo'), T(947, 129, 'maple_debug_0_0'), I(1775, 13, 2, 'min'), I(1835, 13, 13, 'max'), I(1895, 13, 13, 'close')], 'height:37px;padding-bottom:1.500px')
    : row(11, [I(22, 21, 20, 'logo'), T(49, 166, 'Model Explorer: Loads'), I(815, 13, 2, 'min'), I(875, 13, 13, 'max')], 'height:36px');
  return [`:host{display:block;flex:none;font-size:15.500px;height:819px;overflow:hidden;border:1px solid #aaa;border-right:0;border-bottom:2px solid #aaa;background:#f7f7f7;color:#888}:host([active]){border:1px solid #2577bd;border-right-width:2px;border-bottom-width:2px;background:#cde4f6;color:#555}.in{font-size:14px}:host([active]) .in{padding-left:9px}`, `${cap}<div class="in"><slot></slot></div>`];
});

define('status-bar', () => [`:host{display:block;height:30px;background:#cde4f6;color:#111;font-size:13px}.row{height:30px}i{display:block;width:1px;height:26px;background:#888}`,
  row(10, [T(11, 61, 'Run Mode'), [208, 1, '<i></i>'], T(213, 164, 'Solution Animation Stopped'), [717, 1, '<i></i>'], T(722, 17, 'AC'), [783, 1, '<i></i>'], T(792, 96, 'Viewing Present'), [1042, 1, '<i></i>']])]);

define('edge-strip', () => [`:host{display:block;width:10px;height:1030px;flex:none}`,
  `<svg width="10" height="1030"><defs><linearGradient id="g"><stop offset="0" stop-color="#f2f2f2"/><stop offset="1" stop-color="#d9d9d9"/></linearGradient></defs><rect width="10" height="435" fill="url(#g)"/><rect y="253" width="10" height="7" fill="#b8700a"/><path d="M0 255h10M0 258h10" stroke="#ffe36a" stroke-width="1.200"/><rect y="271" width="10" height="10" fill="#b8640a"/><path d="M0 273.500h10M0 277h10" stroke="#ffe36a" stroke-width="1.300"/><path d="M0 424h5l-3 4H0z" fill="#555"/><rect y="435" width="10" height="40" fill="#222"/><path d="M1 441v9" stroke="#fff" stroke-width="1.500" fill="none"/><path d="M0 464h1v5H0" stroke="#888" fill="none"/></svg>`]);

define('bottom-strip', () => [`:host{display:block;height:10px;margin:0 10px;overflow:hidden;background:linear-gradient(90deg,#222 0,#3c3c3c 120px,#444 1055px,#666 1056px,#666 1114px,#444 1115px,#444 1600px,#262626 1800px,#222)}fit-label{color:#fff;font-size:13px;line-height:16px;padding-top:5px}.row{align-items:flex-start}`,
  row(10, [T(1792, 61, '11:01 AM'), [1924, 1, '<div style="width:1px;height:10px;background:#888"></div>']])]);

define('sim-desktop', () => [`:host{display:block;width:1940px;height:1050px}.mid{display:flex}.app{width:1920px;display:flex;flex-direction:column}.rib{background:#efefef;height:142px;border-bottom:1px solid #b8b8b8;border-right:1px solid #ccc}.mdi{display:flex}`,
  `<task-strip></task-strip><div class="mid"><edge-strip></edge-strip><div class="app"><title-bar></title-bar><div class="rib"><ribbon-tabs></ribbon-tabs><ribbon-bar></ribbon-bar></div>
  <div class="mdi"><mdi-window style="width:899px"><model-explorer></model-explorer></mdi-window><mdi-window active style="width:1021px"><oneline-diagram></oneline-diagram></mdi-window></div><status-bar></status-bar></div></div><bottom-strip></bottom-strip>`]);
</script>
</body>
</html>
